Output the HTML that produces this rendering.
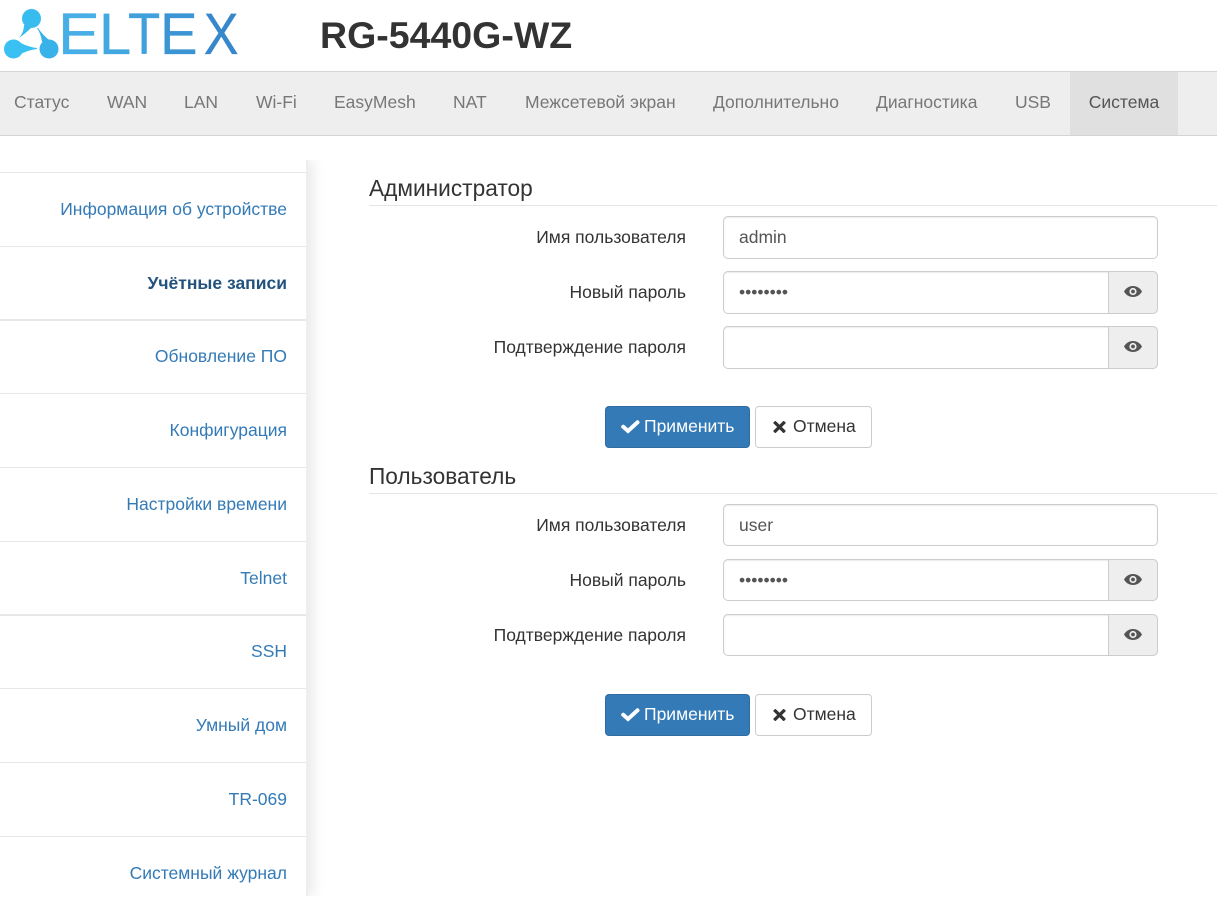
<!DOCTYPE html>
<html lang="ru"><head><meta charset="utf-8"><title>RG-5440G-WZ</title>
<style>
*{box-sizing:border-box}
html,body{margin:0;padding:0;width:1217px;height:898px;overflow:hidden;background:#fff}
body{font-family:"Liberation Sans",sans-serif;font-size:17.5px;color:#333;position:relative}
.a{position:absolute;white-space:nowrap}
h1{position:absolute;left:320px;top:13px;margin:0;font-size:37.5px;line-height:44px;font-weight:bold;color:#333;white-space:nowrap}
#nav{position:absolute;left:0;top:71px;width:1217px;height:65px;background:#eee;border-top:1px solid #d4d4d4;border-bottom:1px solid #d4d4d4}
#nav span{position:absolute;top:0;line-height:61px;color:#777;white-space:nowrap}
#nav .on{left:1070px;width:108px;height:63px;background:#e0e0e0;color:#555;text-align:center}
#side{position:absolute;left:0;top:160px;width:308px;height:736px;background:#fff;border-right:2px solid #eee;box-shadow:5px 0 12px rgba(0,0,0,.09);clip-path:inset(0 -20px 0 0)}
#side div{position:absolute;left:0;width:306px;height:74px;border-top:1px solid #e7e7e7;text-align:right;padding-right:19px;line-height:72px;color:#337ab7;white-space:nowrap}
#side div.t{border-top-width:2px;line-height:71px}
#side div.on{color:#23527c;font-weight:bold}
h2{position:absolute;left:369px;margin:0;width:848px;height:33px;font-size:22.700px;font-weight:normal;line-height:30px;color:#333;border-bottom:1px solid #e5e5e5;white-space:nowrap}
.l{position:absolute;right:531px;line-height:42px;color:#333;white-space:nowrap}
.i{position:absolute;left:723px;width:435px;height:43px;border:1px solid #ccc;border-radius:5px;padding-left:15px;line-height:41px;color:#555;box-shadow:inset 0 1px 1px rgba(0,0,0,.075);background:#fff}
.s{height:42px}
.e{position:absolute;right:-1px;top:-1px;width:50px;height:calc(100% + 2px);background:#eee;border:1px solid #ccc;border-radius:0 5px 5px 0}
.e svg{position:absolute;left:15px;top:13px}
.b{position:absolute;height:42px;border-radius:4px;line-height:38px}
.p{left:605px;width:145px;background:#337ab7;border:1px solid #2e6da4;color:#fff}
.c{left:755px;width:117px;background:#fff;border:1px solid #ccc;color:#333}
.b svg{position:absolute}
.b span{position:absolute;top:0;white-space:nowrap}
</style></head><body>
<svg class="a" style="left:0;top:0" width="250" height="62" viewBox="0 0 250 62">
<g fill="#38bbee">
<circle cx="31.500" cy="18.500" r="9.500"/><circle cx="13.500" cy="49" r="9.500" fill="#3ac0f2"/><circle cx="49" cy="49" r="9.500" fill="#38b2e9"/>
<path d="M24 25 Q24 32 19 38 Q26 33 31 28 Z"/>
<path d="M19 42 Q28 47 37 48 L37 49 Q28 50 19 55 Z" fill="#3ac0f2"/>
<path d="M42 42 Q41 34 37 28 L38 28 Q42 34 49 40 Z" fill="#38b2e9"/>
</g>
<g font-family="Liberation Sans" font-size="58" stroke-linejoin="round" stroke-width=".3">
<text transform="translate(58 54) scale(1.080 1)" fill="#47aee6" stroke="#47aee6">E</text>
<text transform="translate(99 54)" fill="#43a8e2" stroke="#43a8e2">L</text>
<text transform="translate(128 54) scale(.91 1)" fill="#3fa0dc" stroke="#3fa0dc">T</text>
<text transform="translate(160 54) scale(.97 1)" fill="#3b95d5" stroke="#3b95d5">E</text>
<text transform="translate(203.700 54) scale(.9 1)" fill="#3788ca" stroke="#3788ca">X</text>
</g>
</svg>
<h1>RG-5440G-WZ</h1>
<div id="nav">
<span style="left:14px">Статус</span><span style="left:107px">WAN</span><span style="left:184px">LAN</span><span style="left:256px">Wi-Fi</span><span style="left:334px">EasyMesh</span><span style="left:453px">NAT</span><span style="left:525px">Межсетевой экран</span><span style="left:713px">Дополнительно</span><span style="left:876px">Диагностика</span><span style="left:1015px">USB</span><span class="on">Система</span>
</div>
<div id="side">
<div style="top:12px">Информация об устройстве</div>
<div class="on" style="top:86px">Учётные записи</div>
<div class="t" style="top:159px">Обновление ПО</div>
<div style="top:233px">Конфигурация</div>
<div style="top:307px">Настройки времени</div>
<div style="top:381px">Telnet</div>
<div class="t" style="top:454px">SSH</div>
<div style="top:528px">Умный дом</div>
<div style="top:602px">TR-069</div>
<div style="top:676px">Системный журнал</div>
</div>

<h2 style="top:173px">Администратор</h2>
<div class="l" style="top:216px">Имя пользователя</div>
<div class="i" style="top:216px">admin</div>
<div class="l" style="top:271px">Новый пароль</div>
<div class="i" style="top:271px"><span>••••••••</span><div class="e"><svg width="18" height="13" viewBox="0 0 18 13"><path fill="#555" fill-rule="evenodd" d="M0 6.500C2 3 5 1 9 1S16 3 18 6.500C16 10 13 12 9 12S2 10 0 6.500ZM9 2.900A3.600 3.600 0 1 0 9 10.100A3.600 3.600 0 1 0 9 2.900ZM9 4.600A1.900 1.900 0 1 1 9 8.400A1.900 1.900 0 1 1 9 4.600Z"/></svg></div></div>
<div class="l" style="top:326px">Подтверждение пароля</div>
<div class="i" style="top:326px"><div class="e"><svg width="18" height="13" viewBox="0 0 18 13"><path fill="#555" fill-rule="evenodd" d="M0 6.500C2 3 5 1 9 1S16 3 18 6.500C16 10 13 12 9 12S2 10 0 6.500ZM9 2.900A3.600 3.600 0 1 0 9 10.100A3.600 3.600 0 1 0 9 2.900ZM9 4.600A1.900 1.900 0 1 1 9 8.400A1.900 1.900 0 1 1 9 4.600Z"/></svg></div></div>
<div class="b p" style="top:406px"><svg style="left:15px;top:13px" width="19" height="15" viewBox="0 0 19 15"><path fill="none" stroke="#fff" stroke-width="4" stroke-linecap="round" d="M2.200 6.800L7 11L16.500 2.300"/></svg><span style="left:38px">Применить</span></div>
<div class="b c" style="top:406px"><svg style="left:17px;top:14px" width="13" height="12" viewBox="0 0 13 12"><path fill="none" stroke="#333" stroke-width="3.200" d="M1.200 .8L11.800 11.200M11.800 .8L1.200 11.200"/></svg><span style="left:37px">Отмена</span></div>

<h2 style="top:461px">Пользователь</h2>
<div class="l" style="top:504px">Имя пользователя</div>
<div class="i s" style="top:504px">user</div>
<div class="l" style="top:559px">Новый пароль</div>
<div class="i s" style="top:559px"><span>••••••••</span><div class="e"><svg width="18" height="13" viewBox="0 0 18 13"><path fill="#555" fill-rule="evenodd" d="M0 6.500C2 3 5 1 9 1S16 3 18 6.500C16 10 13 12 9 12S2 10 0 6.500ZM9 2.900A3.600 3.600 0 1 0 9 10.100A3.600 3.600 0 1 0 9 2.900ZM9 4.600A1.900 1.900 0 1 1 9 8.400A1.900 1.900 0 1 1 9 4.600Z"/></svg></div></div>
<div class="l" style="top:614px">Подтверждение пароля</div>
<div class="i s" style="top:614px"><div class="e"><svg width="18" height="13" viewBox="0 0 18 13"><path fill="#555" fill-rule="evenodd" d="M0 6.500C2 3 5 1 9 1S16 3 18 6.500C16 10 13 12 9 12S2 10 0 6.500ZM9 2.900A3.600 3.600 0 1 0 9 10.100A3.600 3.600 0 1 0 9 2.900ZM9 4.600A1.900 1.900 0 1 1 9 8.400A1.900 1.900 0 1 1 9 4.600Z"/></svg></div></div>
<div class="b p" style="top:694px"><svg style="left:15px;top:13px" width="19" height="15" viewBox="0 0 19 15"><path fill="none" stroke="#fff" stroke-width="4" stroke-linecap="round" d="M2.200 6.800L7 11L16.500 2.300"/></svg><span style="left:38px">Применить</span></div>
<div class="b c" style="top:694px"><svg style="left:17px;top:14px" width="13" height="12" viewBox="0 0 13 12"><path fill="none" stroke="#333" stroke-width="3.200" d="M1.200 .8L11.800 11.200M11.800 .8L1.200 11.200"/></svg><span style="left:37px">Отмена</span></div>
</body></html>
